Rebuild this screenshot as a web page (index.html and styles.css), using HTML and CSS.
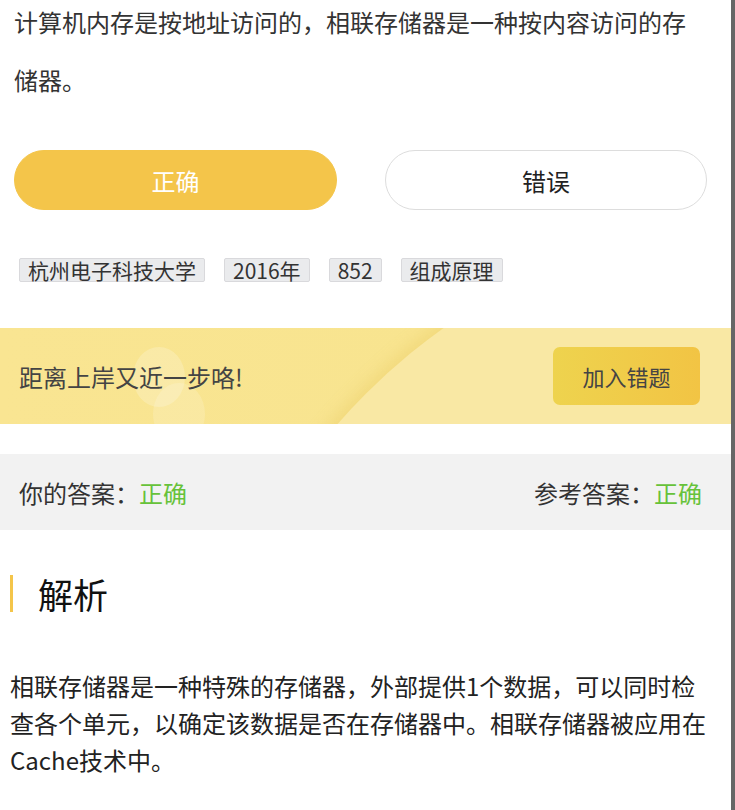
FILE: index.html
```html
<!DOCTYPE html>
<html lang="zh">
<head>
<meta charset="utf-8">
<link rel="stylesheet" href="styles.css">
</head>
<body>
<div class="page">
  <p class="question">计算机内存是按地址访问的，相联存储器是一种按内容访问的存储器。</p>
  <div class="choices">
    <div class="choice choice-on">正确</div>
    <div class="choice">错误</div>
  </div>
  <div class="tags">
    <span class="tag">杭州电子科技大学</span>
    <span class="tag">2016年</span>
    <span class="tag">852</span>
    <span class="tag">组成原理</span>
  </div>
  <div class="banner">
    <span class="arc"></span>
    <span class="bubble bubble-a"></span>
    <span class="bubble bubble-b"></span>
    <span class="banner-text">距离上岸又近一步咯!</span>
    <div class="banner-btn">加入错题</div>
  </div>
  <div class="answers">
    <span>你的答案：<em class="ok">正确</em></span>
    <span>参考答案：<em class="ok">正确</em></span>
  </div>
  <h2 class="section-title">解析</h2>
  <p class="analysis">相联存储器是一种特殊的存储器，外部提供1个数据，可以同时检查各个单元，以确定该数据是否在存储器中。相联存储器被应用在Cache技术中。</p>
</div>
</body>
</html>
```
FILE: styles.css
```css
html, body {
  margin: 0;
  padding: 0;
  background: #fff;
}
body {
  font-family: "Noto Sans CJK SC", "Noto Sans", sans-serif;
  color: #333;
  overflow: hidden;
}
.page {
  width: 731px;
  min-height: 810px;
  border-right: 4px solid #666;
  display: flex;
  flex-direction: column;
}
.question {
  margin: -7px 0 0;
  padding: 0 30px 0 14px;
  font-size: 24px;
  line-height: 58px;
  color: #333;
}
.choices {
  display: grid;
  grid-template-columns: 323px 322px;
  column-gap: 48px;
  padding-left: 14px;
  margin-top: 41px;
}
.choice {
  height: 60px;
  box-sizing: border-box;
  border: 1px solid #ddd;
  border-radius: 30px;
  display: flex;
  align-items: center;
  justify-content: center;
  font-size: 24px;
  color: #222;
}
.choice-on {
  background: #f4c54a;
  border-color: #f4c54a;
  color: #fff;
}
.tags {
  display: flex;
  gap: 19px;
  padding-left: 19px;
  margin-top: 48px;
}
.tag {
  height: 24px;
  box-sizing: border-box;
  padding: 0 8px;
  font-size: 21px;
  line-height: 22px;
  background: #eaebed;
  border: 1px solid #d9d9dc;
  border-radius: 2px;
  color: #333;
}
.banner {
  position: relative;
  overflow: hidden;
  margin-top: 46px;
  height: 96px;
  background: linear-gradient(90deg, #f9e592 0%, #f8e48f 60%, #f6df88 100%);
  display: flex;
  align-items: center;
  justify-content: space-between;
  padding: 0 31px 0 19px;
}
.arc {
  position: absolute;
  left: 186px;
  top: -114px;
  width: 1228px;
  height: 1228px;
  border-radius: 50%;
  background: #f9e8a4;
  box-shadow: -6px -4px 14px rgba(232, 200, 95, 0.35);
}
.bubble {
  position: absolute;
  border-radius: 50%;
  background: rgba(255, 255, 255, 0.2);
}
.bubble-a {
  left: 133px;
  top: 19px;
  width: 52px;
  height: 60px;
}
.bubble-b {
  left: 153px;
  top: 55px;
  width: 52px;
  height: 62px;
  background: rgba(255, 255, 255, 0.16);
}
.banner-text {
  position: relative;
  font-size: 24px;
  color: #444;
}
.banner-btn {
  position: relative;
  width: 147px;
  height: 58px;
  border-radius: 7px;
  background: linear-gradient(90deg, #eed34e 0%, #f2c444 100%);
  display: flex;
  align-items: center;
  justify-content: center;
  font-size: 22px;
  color: #444;
}
.answers {
  margin-top: 30px;
  height: 76px;
  background: #f2f2f2;
  display: flex;
  align-items: center;
  justify-content: space-between;
  padding: 0 29px 0 19px;
  font-size: 24px;
  color: #333;
}
.ok {
  font-style: normal;
  color: #67c23a;
}
.section-title {
  margin: 45px 0 0 10px;
  padding-left: 25px;
  border-left: 3px solid #f4c54a;
  height: 37px;
  line-height: 37px;
  font-size: 35px;
  font-weight: normal;
  color: #111;
}
.analysis {
  margin: 55px 0 0;
  padding: 0 20px 0 10px;
  font-size: 24px;
  line-height: 37px;
  color: #222;
}
```
